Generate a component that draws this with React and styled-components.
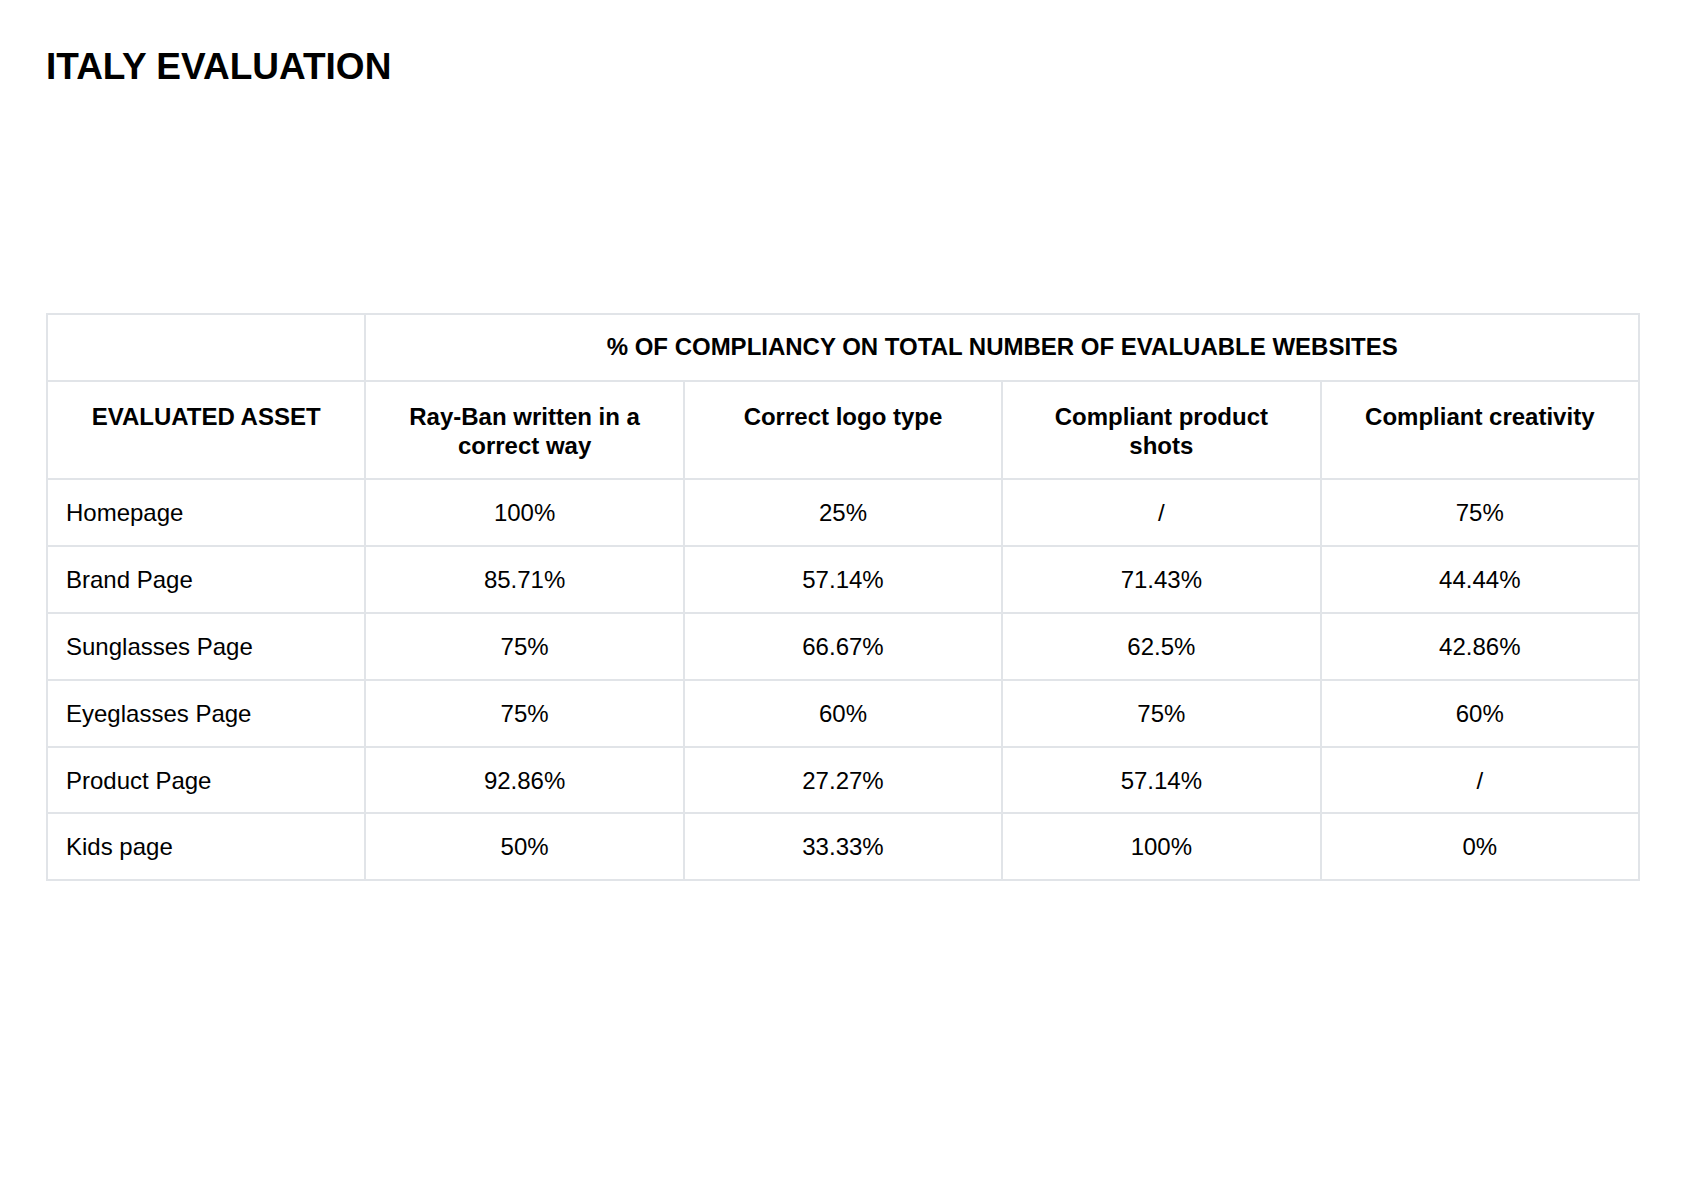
import styled, { createGlobalStyle } from "styled-components";

const GlobalStyle = createGlobalStyle`
  body {
    margin: 0;
    background: #ffffff;
    font-family: "Liberation Sans", Arial, sans-serif;
    color: #000000;
  }
`;

const StyledPage = styled.div`
  padding: 46px 44px 0 46px;
  width: 1594px;
`;

const StyledTitle = styled.h1`
  margin: 0 0 225px;
  font-size: 37px;
  font-weight: 700;
  line-height: normal;
  color: #000000;
`;

const StyledTable = styled.table`
  width: 100%;
  border-collapse: collapse;
  table-layout: fixed;
  font-size: 24px;
  line-height: 1.2;
`;

const StyledHeadCell = styled.th`
  border: 2px solid #e1e4e8;
  padding: ${(props) => (props.$spanHead ? "18px 18px 18px" : "21px 18px 18px")};
  font-weight: 700;
  text-align: center;
  vertical-align: ${(props) => (props.$spanHead ? "middle" : "top")};
`;

const StyledCell = styled.td`
  border: 2px solid #e1e4e8;
  padding: 19px 18px 17px;
  font-weight: 400;
  text-align: ${(props) => (props.$label ? "left" : "center")};
  vertical-align: top;
`;

const columns = [
  "Ray-Ban written in a correct way",
  "Correct logo type",
  "Compliant product shots",
  "Compliant creativity",
];

const rows = [
  { asset: "Homepage", values: ["100%", "25%", "/", "75%"] },
  { asset: "Brand Page", values: ["85.71%", "57.14%", "71.43%", "44.44%"] },
  { asset: "Sunglasses Page", values: ["75%", "66.67%", "62.5%", "42.86%"] },
  { asset: "Eyeglasses Page", values: ["75%", "60%", "75%", "60%"] },
  { asset: "Product Page", values: ["92.86%", "27.27%", "57.14%", "/"] },
  { asset: "Kids page", values: ["50%", "33.33%", "100%", "0%"] },
];

function App() {
  return (
    <>
      <GlobalStyle />
      <StyledPage>
        <StyledTitle>ITALY EVALUATION</StyledTitle>

        <StyledTable>
          <thead>
            <tr>
              <StyledHeadCell $spanHead />
              <StyledHeadCell $spanHead colSpan={4}>
                % OF COMPLIANCY ON TOTAL NUMBER OF EVALUABLE WEBSITES
              </StyledHeadCell>
            </tr>
            <tr>
              <StyledHeadCell>EVALUATED ASSET</StyledHeadCell>
              {columns.map((col) => (
                <StyledHeadCell key={col}>{col}</StyledHeadCell>
              ))}
            </tr>
          </thead>
          <tbody>
            {rows.map((row) => (
              <tr key={row.asset}>
                <StyledCell $label>{row.asset}</StyledCell>
                {row.values.map((value, i) => (
                  <StyledCell key={i}>{value}</StyledCell>
                ))}
              </tr>
            ))}
          </tbody>
        </StyledTable>
      </StyledPage>
    </>
  );
}

export default App;
